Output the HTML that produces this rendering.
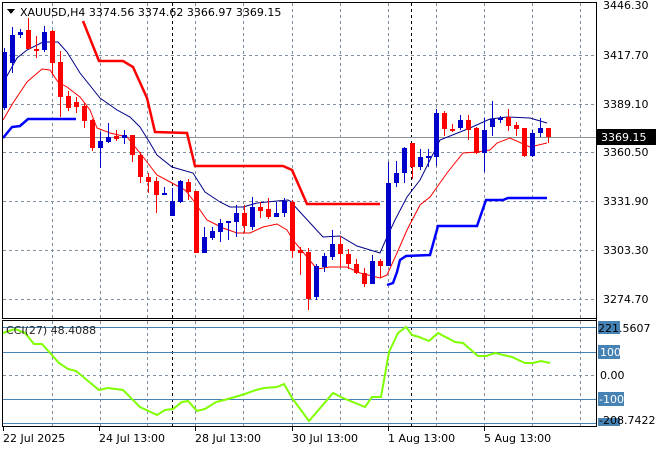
<!DOCTYPE html>
<html><head><meta charset="utf-8"><style>
html,body{margin:0;padding:0;background:#fff;width:660px;height:450px;overflow:hidden}
svg{display:block}
text{font-family:"DejaVu Sans","Liberation Sans",sans-serif;font-size:11px;fill:#000}
</style></head><body>
<svg id="s" width="660" height="450" xmlns="http://www.w3.org/2000/svg" shape-rendering="crispEdges">
<rect width="660" height="450" fill="#fff"/>
<g id="grid" stroke="#8090a0" stroke-dasharray="3,3" stroke-width="1"></g>
<line x1="3" y1="137.5" x2="596" y2="137.5" stroke="#8a9098"/>
<g id="lines" fill="none" shape-rendering="auto"></g>
<g id="candles"></g>
<!-- borders -->
<rect x="2.5" y="2.5" width="594" height="316" fill="none" stroke="#000"/>
<rect x="2.5" y="320.5" width="594" height="106" fill="none" stroke="#000"/>
<line x1="596.5" y1="2" x2="596.5" y2="427" stroke="#000"/>
<g id="ticks" stroke="#000"></g>
<!-- title -->
<path d="M7 9 L15 9 L11 14 Z" fill="#000"/>
<text x="20" y="16">XAUUSD,H4  3374.56 3374.62 3366.97 3369.15</text>
<!-- price axis -->
<text x="603" y="9">3446.30</text>
<text x="603" y="59">3417.70</text>
<text x="603" y="108">3389.10</text>
<text x="603" y="156">3360.50</text>
<text x="603" y="205">3331.90</text>
<text x="603" y="254">3303.30</text>
<text x="603" y="303">3274.70</text>
<rect x="597" y="129" width="59" height="16" fill="#000"/>
<text x="601" y="141" style="fill:#fff">3369.15</text>
<!-- cci axis -->
<rect x="598" y="321" width="22" height="13" fill="#4682b4"/>
<text x="598" y="332">221.5607</text>
<rect x="598" y="345" width="22" height="14" fill="#4682b4"/>
<text x="600" y="356" style="fill:#fff">100</text>
<text x="600" y="379">0.00</text>
<rect x="598" y="392" width="26" height="14" fill="#4682b4"/>
<text x="599" y="403" style="fill:#fff">-100</text>
<rect x="598" y="418" width="22" height="8" fill="#4682b4"/>
<text x="599" y="424">-208.7422</text>
<text x="6" y="334" style="fill:#222">CCI(27) 48.4088</text>
<!-- time axis -->
<text x="3" y="442">22 Jul 2025</text>
<text x="99" y="442">24 Jul 13:00</text>
<text x="195" y="442">28 Jul 13:00</text>
<text x="292" y="442">30 Jul 13:00</text>
<text x="388" y="442">1 Aug 13:00</text>
<text x="484" y="442">5 Aug 13:00</text>
</svg>
<script>
var NS="http://www.w3.org/2000/svg";
function el(p,t,a){var e=document.createElementNS(NS,t);for(var k in a)e.setAttribute(k,a[k]);p.appendChild(e);return e;}
var g=document.getElementById('grid');
[55,104,152,201,250,299,375].forEach(function(y){el(g,'line',{x1:3,y1:y+.5,x2:596,y2:y+.5});});
[52,100,147,195,243,292,340,388,436,484,532,580].forEach(function(x){
 el(g,'line',{x1:x+.5,y1:3,x2:x+.5,y2:318});el(g,'line',{x1:x+.5,y1:321,x2:x+.5,y2:426});});
[172,411].forEach(function(x){
 el(g,'line',{x1:x+.5,y1:3,x2:x+.5,y2:318,stroke:'#000'});el(g,'line',{x1:x+.5,y1:321,x2:x+.5,y2:426,stroke:'#000'});});
var L=document.getElementById('lines');
[327,352,399,423].forEach(function(y){el(L,'line',{x1:3,y1:y+.5,x2:596,y2:y+.5,stroke:'#4682b4','shape-rendering':'crispEdges'});});
function pl(pts,col,w){el(L,'polyline',{points:pts,stroke:col,'stroke-width':w});}
pl("83,21 99,61 123,61 133,67 147,98 155,132 187,133 195,166 283,166 292,170 307,204 380,204","#f00",2.5);
pl("3,138 12,127 20,126 28,119 76,119","#00f",2.5);
pl("387,285 393,283 397,272 400,260 406,256 430,255 438,226 477,226 486,200 503,200 508,198 547,198","#00f",2.5);
pl("3,83 17,58 27,50 43,42 58,42 67,52 80,73 100,98 117,110 130,117 140,127 150,143 157,155 172,167 193,173 205,192 220,202 230,207 243,207 257,203 277,201 288,200 290,201 300,212 323,237 340,236 357,246 380,253 387,237 395,220 407,197 420,180 440,140 470,128 490,119 507,117 530,118 547,123","#00008b",1);
pl("3,120 13,103 27,82 42,69 50,70 58,82 67,87 80,97 90,110 97,128 110,133 127,137 140,153 157,175 172,183 185,190 193,200 207,220 223,228 237,233 250,233 263,227 277,224 287,230 293,240 307,257 317,269 330,267 347,267 360,273 380,278 387,275 397,253 407,230 420,205 430,197 447,173 463,153 477,152 490,150 497,143 510,138 530,147 547,143","#f00",1);
pl("3,333 15,329 25,333 34,344 42,344 59,363 68,369 76,371 99,390 108,388 123,390 140,407 157,415 165,410 173,409 182,402 188,401 197,411 205,409 216,402 228,399 245,394 256,390 264,388 277,387 284,384 292,398 309,421 333,393 343,398 365,407 372,397 381,397 389,352 398,333 406,327 412,335 419,337 429,341 438,333 455,342 463,343 478,356 486,356 495,353 512,357 525,363 533,363 541,361 550,363","#7fff00",2);
// candles: color, bodyTop, bodyBot, wickTop, wickBot
var C=[
['b',52,108,48,110],['b',35,63,27,73],['b',32,35,29,38],['r',30,49,18,49],['r',49,51,36,58],['b',32,50,26,52],['r',31,63,30,75],['r',62,97,51,117],['r',96,108,91,111],['r',102,107,97,113],
['r',106,121,103,128],['r',120,148,119,151],['b',141,148,132,168],['b',137,142,123,143],['r',136,139,130,141],['b',135,138,130,144],['r',135,155,135,162],['r',155,177,152,183],['r',177,182,173,193],['r',181,195,177,213],
['b',193,194,187,194],['b',201,216,188,216],['b',181,202,180,203],['r',182,192,179,200],['r',191,253,191,253],['b',237,253,227,253],['b',231,238,227,240],['b',223,232,219,242],['b',221,223,221,240],['b',213,222,205,237],
['r',213,226,205,233],['b',207,227,197,230],['r',207,211,202,218],['r',209,217,198,219],['b',213,217,202,217],['b',201,213,198,217],['r',202,251,200,258],['r',250,253,247,275],['r',252,299,248,310],['b',266,297,264,300],
['b',256,267,253,272],['b',244,257,230,260],['r',244,254,236,267],['r',254,264,249,269],['r',264,273,259,274],['r',273,284,268,287],['b',261,284,255,284],['r',261,266,259,278],['b',183,266,162,266],['b',173,183,161,187],
['b',148,173,147,183],['r',143,167,143,179],['b',157,167,149,170],['b',156,157,149,167],['b',113,157,109,166],['r',113,129,111,136],['r',129,131,124,132],['b',120,128,115,130],['r',120,130,115,140],['r',128,153,127,154],
['b',130,153,118,172],['b',119,127,101,136],['b',118,119,116,123],['r',117,126,109,131],['r',125,129,122,136],['r',128,156,128,157],['b',133,156,130,157],['b',128,133,118,137],['r',128,137,128,143]];
var cg=document.getElementById('candles');
C.forEach(function(c,i){var x=4+8*i;var col=c[0]=='r'?'#f00':'#00c';
 el(cg,'rect',{x:x,y:c[3],width:1,height:Math.max(1,c[4]-c[3]),fill:col});
 var x0=Math.max(3,x-2);
 el(cg,'rect',{x:x0,y:c[1],width:x+3-x0,height:Math.max(2,c[2]-c[1]),fill:col});});
var tk=document.getElementById('ticks');
[3,99,195,292,388,484].forEach(function(x){el(tk,'line',{x1:x+.5,y1:427,x2:x+.5,y2:431});});
</script>
</body></html>
